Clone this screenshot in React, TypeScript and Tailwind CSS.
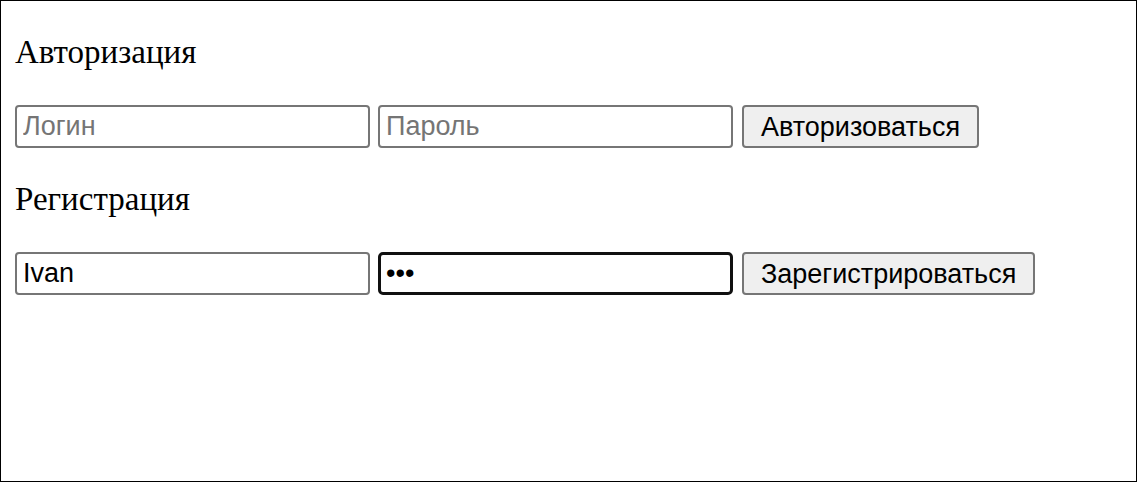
import React from "react";

export default function App() {
  const inputCls =
    "w-[355px] h-[43px] border-2 border-[#767676] rounded-[4px] px-[6px] text-[27px] text-black placeholder:text-[#757575] bg-white outline-none";
  const btnCls =
    "ml-[1px] h-[43px] border-2 border-[#767676] rounded-[4px] bg-[#efefef] px-[17px] text-[27px] text-black";
  const serif = { fontFamily: "'Liberation Serif', 'Times New Roman', serif" };
  return (
    <div
      className="w-[1137px] h-[482px] border border-black bg-white box-border px-[14px]"
      style={{ fontFamily: "'Liberation Sans', Arial, sans-serif" }}
    >
      <div className="pt-[32px] text-[33px] leading-[38px] text-black" style={serif}>
        Авторизация
      </div>
      <div className="mt-[34px] flex gap-[8px] items-center">
        <input className={inputCls} placeholder="Логин" />
        <input className={inputCls} placeholder="Пароль" type="password" />
        <button className={btnCls}>Авторизоваться</button>
      </div>
      <div className="mt-[32px] text-[33px] leading-[38px] text-black" style={serif}>
        Регистрация
      </div>
      <div className="mt-[34px] flex gap-[8px] items-center">
        <input className={inputCls} defaultValue="Ivan" />
        <input
          className="w-[355px] h-[43px] border-[3px] border-[#101010] rounded-[5px] px-[5px] text-[27px] text-black bg-white outline-none"
          type="password"
          defaultValue="123"
        />
        <button className={btnCls}>Зарегистрироваться</button>
      </div>
    </div>
  );
}
